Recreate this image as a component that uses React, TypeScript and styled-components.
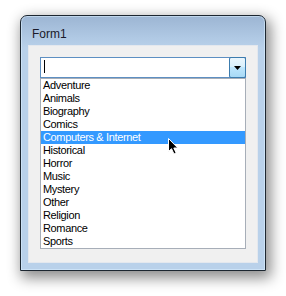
import React from "react";
import styled, { createGlobalStyle } from "styled-components";

const genres = [
  "Adventure",
  "Animals",
  "Biography",
  "Comics",
  "Computers & Internet",
  "Historical",
  "Horror",
  "Music",
  "Mystery",
  "Other",
  "Religion",
  "Romance",
  "Sports",
];

function App() {
  const selected = 4;

  return (
    <>
      <GlobalStyle />
      <Stage>
        <Window>
          <TitleBar>Form1</TitleBar>
          <Client>
            <Combo>
              <ComboInput>
                <Caret />
              </ComboInput>
              <DropButton>
                <svg width="7" height="4" viewBox="0 0 7 4">
                  <path d="M0 0 H7 L3.5 4 Z" fill="#000" />
                </svg>
              </DropButton>
            </Combo>
            <ListBox>
              {genres.map((g, i) => (
                <Item key={g} active={i === selected}>
                  {g}
                </Item>
              ))}
              <Pointer width="11" height="17" viewBox="0 0 11 17">
                <path
                  d="M0.5 0.5 V13.5 L3.5 10.7 L6 16 L8.2 15 L5.8 10 H9.8 Z"
                  fill="#000"
                  stroke="#fff"
                  strokeWidth="1"
                  strokeLinejoin="miter"
                />
              </Pointer>
            </ListBox>
          </Client>
        </Window>
      </Stage>
    </>
  );
}

export default App;

const GlobalStyle = createGlobalStyle`
  html, body {
    margin: 0;
    padding: 0;
    background: #ffffff;
  }
  body {
    width: 286px;
    height: 296px;
    overflow: hidden;
  }
`;

const Stage = styled.div`
  padding: 15px 0 0 20px;
`;

const Window = styled.div`
  width: 246px;
  height: 256px;
  box-sizing: border-box;
  border: 1px solid #1c2630;
  border-radius: 7px 7px 0 0;
  padding: 0 7px 7px 7px;
  display: flex;
  flex-direction: column;
  background: linear-gradient(
    to bottom,
    #9cb5d3 0px,
    #b0c9e4 22px,
    #b9d1ea 32px,
    #b9d1ea 100%
  );
  box-shadow: 3px 5px 14px 2px rgba(0, 0, 0, 0.45),
    inset 0 0 0 1px rgba(220, 240, 255, 0.55);
`;

const TitleBar = styled.div`
  height: 29px;
  box-sizing: border-box;
  padding: 11px 0 0 4px;
  font-family: "Liberation Sans", Arial, sans-serif;
  font-size: 12px;
  line-height: 14px;
  color: #1a1a2a;
`;

const Client = styled.div`
  flex: 1;
  background: #f0f0f0;
  padding: 12px 0 0 12px;
  box-shadow: inset 0 0 0 1px #e4e8ee;
`;

const Combo = styled.div`
  width: 206px;
  height: 21px;
  box-sizing: border-box;
  border: 1px solid #5d8fc2;
  background: #ffffff;
  display: flex;
`;

const ComboInput = styled.div`
  flex: 1;
  padding: 2px 0 0 3px;
`;

const Caret = styled.div`
  width: 1px;
  height: 13px;
  background: #000;
`;

const DropButton = styled.div`
  width: 17px;
  margin: -1px -1px -1px 0;
  box-sizing: border-box;
  border: 1px solid #3c7cae;
  border-radius: 2px;
  background: linear-gradient(
    to bottom,
    #eaf6fd 0%,
    #d9f0fc 45%,
    #bee6fd 50%,
    #a7d9f5 100%
  );
  display: flex;
  align-items: center;
  justify-content: center;
  padding-top: 1px;
`;

const ListBox = styled.div`
  position: relative;
  width: 206px;
  box-sizing: border-box;
  border: 1px solid #a7aeb8;
  background: #ffffff;
  display: flex;
  flex-direction: column;
`;

const Item = styled.div<{ active?: boolean }>`
  height: 13px;
  line-height: 13px;
  padding-left: 2px;
  font-family: "Liberation Sans", Arial, sans-serif;
  font-size: 11px;
  letter-spacing: -0.35px;
  white-space: nowrap;
  color: ${(p) => (p.active ? "#ffffff" : "#000000")};
  background: ${(p) => (p.active ? "#3399ff" : "transparent")};
`;

const Pointer = styled.svg`
  position: absolute;
  left: 127px;
  top: 59px;
`;
